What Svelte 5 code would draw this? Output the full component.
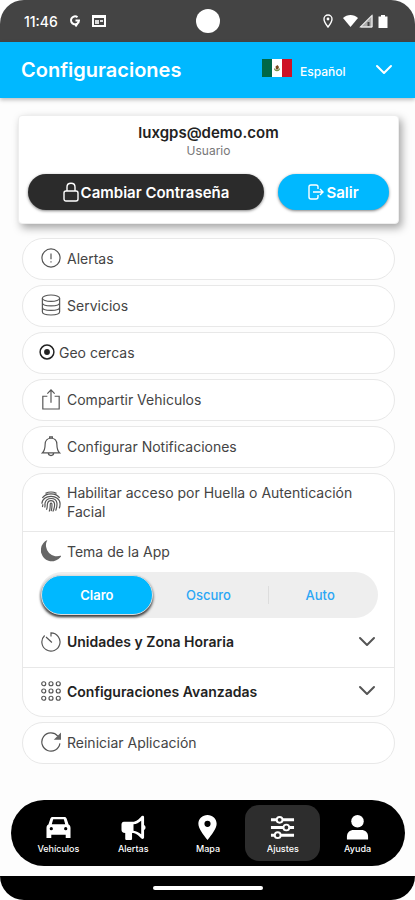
<script lang="ts">
	type Item = { label: string; icon: string };

	const items: Item[] = [
		{ label: 'Alertas', icon: 'alert' },
		{ label: 'Servicios', icon: 'database' },
		{ label: 'Geo cercas', icon: 'target' },
		{ label: 'Compartir Vehiculos', icon: 'share' },
		{ label: 'Configurar Notificaciones', icon: 'bell' }
	];

	const themes: string[] = ['Claro', 'Oscuro', 'Auto'];

	const tabs: Item[] = [
		{ label: 'Vehículos', icon: 'car' },
		{ label: 'Alertas', icon: 'horn' },
		{ label: 'Mapa', icon: 'pin' },
		{ label: 'Ajustes', icon: 'sliders' },
		{ label: 'Ayuda', icon: 'person' }
	];

	let theme = $state('Claro');
	let activeTab = $state('Ajustes');
	let language = $state('Español');
	let unitsOpen = $state(false);
	let advancedOpen = $state(false);
</script>

{#snippet chevron()}
	<svg class="chevron" viewBox="0 0 18 12" aria-hidden="true">
		<path d="M2 2l7 7 7-7" />
	</svg>
{/snippet}

{#snippet lineIcon(name: string)}
	<svg class="line-icon" class:small={name === 'target'} viewBox="0 0 22 24" aria-hidden="true">
		{#if name === 'alert'}
			<circle cx="11" cy="12" r="10" />
			<path d="M11 7v6.5M11 15.5v1.5" />
		{:else if name === 'database'}
			<ellipse cx="11" cy="4.5" rx="9.5" ry="3.5" />
			<path d="M1.500 4.500v15c0 2 4 3.500 9.500 3.500s9.500-1.500 9.500-3.500v-15M1.500 9.500c0 2 4 3.500 9.500 3.500s9.500-1.500 9.500-3.500M1.500 14.500c0 2 4 3.500 9.500 3.500s9.500-1.500 9.500-3.500" />
		{:else if name === 'target'}
			<circle cx="11" cy="12" r="9.500" class="ring" />
			<circle cx="11" cy="12" r="4" class="dot" />
		{:else if name === 'share'}
			<path d="M7 9H2v14h18V9h-5M11 16V2M7 6l4-4 4 4" />
		{:else if name === 'bell'}
			<path d="M1.500 19.500c2-2 3-4 3-9 0-4.500 2.500-7 6.500-7s6.500 2.500 6.500 7c0 5 1 7 3 9zM9.500 3.500V2h3v1.500M8 19.500c0 4 6 4 6 0" />
		{:else if name === 'finger'}
			<path
				d="M5 2.500c4-2 8-2 12 0M1.500 7.500c4-6 15-6 19 0M1 14c0-11 20-11 20 0 0 2-.3 4-1 5M4 18c1-2 0-3 .5-5 1.500-6.500 12-6.500 13 0 .3 3-.2 6-1.500 8.500M6 20.500c1.500-3 .5-4.500 1.200-7 1-4 6.600-4 7.600 0 .5 3-.2 6-1.800 9M9 22.500c1.500-3.500 1-6 1.200-8.500.3-1 1.500-1 1.800 0 .2 3 0 5-.8 8M1.500 17.500c.5-1 .5-2 .5-3"
			/>
		{:else if name === 'moon'}
			<path class="moon" d="M7 0A12 12 0 0 0 23 16.500 12.200 12.200 0 1 1 7 0z" />
		{:else if name === 'timer'}
			<path d="M11 6V2a10 10 0 1 1-7 2.800M5.500 6.500l6.500 6" />
		{:else if name === 'grid'}
			{#each [4, 12, 20] as cy}
				{#each [3, 11, 19] as cx}
					<circle {cx} {cy} r="2.200" />
				{/each}
			{/each}
		{:else if name === 'reload'}
			<path d="M18.500 5.500a10 10 0 1 0 2.300 8" />
			<path class="arrow" d="M22 1.500v8h-8z" />
		{/if}
	</svg>
{/snippet}

{#snippet tabIcon(name: string)}
	<svg class="tab-icon" viewBox="0 0 26 26" aria-hidden="true">
		{#if name === 'car'}
			<path
				fill-rule="evenodd"
				d="M7 2h12c1.500 0 2 .6 2.500 2l2 6c1.300.8 2 1.800 2 3.500V24h-5v-3.500H5.500V24h-5V13.500c0-1.700.7-2.700 2-3.500l2-6C5 2.600 5.500 2 7 2zM7.500 4.500L6 9.500h14l-1.500-5zM5.500 12.500a1.700 1.700 0 1 0 0 3.400 1.700 1.700 0 0 0 0-3.400zM20.500 12.500a1.700 1.700 0 1 0 0 3.400 1.700 1.700 0 0 0 0-3.400z"
			/>
		{:else if name === 'horn'}
			<path
				fill-rule="evenodd"
				d="M3 7h9c4 0 7-3 9-5.500.8-1 3-.8 3 .8v8c2 .8 2 4.400 0 5.200v8c0 1.600-2.200 1.800-3 .8-2-2.500-5-5.300-8-5.700h-1.500v6.200c0 1-.8 1.400-1.500 1.400H6c-1 0-1.600-.6-1.600-1.600v-5.800C1.500 18.800.5 17 .5 15V10c0-1.800 1-3 2.500-3zM13 9.700v6.600c3 .3 5.600 1.700 8 3.700V6c-2.400 2-5 3.400-8 3.700z"
			/>
		{:else if name === 'pin'}
			<path
				fill-rule="evenodd"
				d="M13 0c5.200 0 9.500 4 9.500 9 0 5-5 11-9.500 17C8.500 20 3.500 14 3.500 9c0-5 4.300-9 9.500-9zM13 6a3.200 3.200 0 1 0 0 6.400A3.200 3.200 0 0 0 13 6z"
			/>
		{:else if name === 'sliders'}
			<path class="track" d="M1 5h24M1 13h24M1 21h24" />
			<g class="knob">
				<circle cx="10" cy="5" r="3" />
				<circle cx="17" cy="13" r="3" />
				<circle cx="8" cy="21" r="3" />
			</g>
		{:else}
			<circle cx="13" cy="6.500" r="6.500" />
			<path d="M2 25.500v-3C2 18 5 15.500 9 15.500h8c4 0 7 2.500 7 7v3z" />
		{/if}
	</svg>
{/snippet}

<div class="app">
	<div class="status">
		<div class="status-side">
			<span>11:46</span>
			<svg class="s-icon" viewBox="0 0 14 14" aria-hidden="true">
				<path d="M9.500 3.200A4 4 0 1 0 11 6.500H7.500M10.500 8L7.500 12.500" fill="none" stroke="#fff" stroke-width="2" />
			</svg>
			<svg class="s-icon" viewBox="0 0 14 14" aria-hidden="true">
				<path fill="#fff" fill-rule="evenodd" d="M0 1h14v12H0zM2 4v7h10V4z" />
				<path fill="#ddd" d="M3 6h4v4H3zM8 6h3v2H8z" />
			</svg>
		</div>
		<span class="camera"></span>
		<div class="status-side right">
			<svg class="s-icon" viewBox="0 0 14 14" aria-hidden="true">
				<path d="M7 1a4 4 0 0 1 4 4c0 3-4 8-4 8S3 8 3 5a4 4 0 0 1 4-4z" fill="none" stroke="#fff" stroke-width="1.400" />
				<circle cx="7" cy="5" r="1.400" fill="#fff" />
			</svg>
			<svg class="signals" viewBox="0 0 48 14" aria-hidden="true">
				<path fill="#fff" d="M0 4c4-4 11-4 15 0l-7.500 9z" />
				<path fill="#aaa" d="M16 13.500L29.500 0v13.500z" />
				<path fill="none" stroke="#fff" d="M17.500 13L29 1.500V13z" />
				<path fill="#444" d="M24.500 8h2v4h-2z" />
				<path fill="#fff" d="M38 1h4v1.500h2.500V14h-9V2.500H38z" />
			</svg>
		</div>
	</div>

	<header class="topbar">
		<h1>Configuraciones</h1>
		<label class="language">
			<svg class="flag" viewBox="0 0 30 18" role="img" aria-label="México">
				<path fill="#fff" d="M0 0h30v18H0z" />
				<path fill="#006847" d="M0 0h10v18H0z" />
				<path fill="#ce1126" d="M20 0h10v18H20z" />
				<path fill="none" stroke="#6b8c3c" stroke-width="1.200" d="M12.500 9.500c.5 3 4.500 3 5 0" />
				<path fill="#7a4a1e" d="M13.500 7.500l2-1.500 1.500 2-1 2.500h-2z" />
			</svg>
			<select bind:value={language} aria-label="Idioma">
				<option>Español</option>
				<option>English</option>
			</select>
			{@render chevron()}
		</label>
	</header>

	<main>
		<section class="account">
			<strong class="email">luxgps@demo.com</strong>
			<span class="role">Usuario</span>
			<div class="actions">
				<button class="pill dark">
					<svg class="lock" viewBox="0 0 16 20" aria-hidden="true">
						<rect x="1" y="9" width="14" height="10" rx="2" />
						<path d="M4 9V5c0-5 8-5 8 0v4" />
					</svg>
					Cambiar Contraseña
				</button>
				<button class="pill blue">
					<svg class="exit" viewBox="0 0 16 16" aria-hidden="true">
						<path d="M10 5V3c0-1.500-.5-2-2-2H3C1.500 1 1 1.500 1 3v10c0 1.500.5 2 2 2h5c1.500 0 2-.5 2-2v-2M5 8h10M12 5l3 3-3 3" />
					</svg>
					Salir
				</button>
			</div>
		</section>

		<div class="list">
			{#each items as item (item.label)}
				<button class="row single">
					{@render lineIcon(item.icon)}
					<span>{item.label}</span>
				</button>
			{/each}

			<div class="group">
				<button class="row biometric">
					{@render lineIcon('finger')}
					<span>Habilitar acceso por Huella o Autenticación Facial</span>
				</button>

				<fieldset class="theme">
					<legend class="row">
						{@render lineIcon('moon')}
						<span>Tema de la App</span>
					</legend>
					<div class="segment">
						{#each themes as name (name)}
							<label class:selected={theme === name}>
								<input type="radio" name="theme" value={name} bind:group={theme} />
								{name}
							</label>
						{/each}
					</div>
				</fieldset>

				<button class="row expand" aria-expanded={unitsOpen} onclick={() => (unitsOpen = !unitsOpen)}>
					{@render lineIcon('timer')}
					<span>Unidades y Zona Horaria</span>
					{@render chevron()}
				</button>
				<button
					class="row expand advanced"
					aria-expanded={advancedOpen}
					onclick={() => (advancedOpen = !advancedOpen)}
				>
					{@render lineIcon('grid')}
					<span>Configuraciones Avanzadas</span>
					{@render chevron()}
				</button>
			</div>

			<button class="row single">
				{@render lineIcon('reload')}
				<span>Reiniciar Aplicación</span>
			</button>
		</div>
	</main>

	<nav class="tabs">
		{#each tabs as tab (tab.label)}
			<button class:active={activeTab === tab.label} onclick={() => (activeTab = tab.label)}>
				{@render tabIcon(tab.icon)}
				<span>{tab.label}</span>
			</button>
		{/each}
	</nav>

	<div class="gesture"><span></span></div>
</div>

<style>
	:global(body) {
		background: #fff;
	}

	.app {
		display: flex;
		flex-direction: column;
		min-height: 100vh;
		box-sizing: border-box;
		background: #fdfdfd;
		color: #444;
		font-family: Inter, 'Liberation Sans', sans-serif;
		border-radius: 24px;
		overflow: hidden;
	}

	.app * {
		box-sizing: border-box;
	}

	button,
	select {
		font: inherit;
		color: inherit;
		background: none;
		border: none;
		margin: 0;
		padding: 0;
		cursor: pointer;
	}

	svg {
		flex: none;
		display: block;
	}

	/* Status bar */
	.status {
		display: grid;
		grid-template-columns: 1fr auto 1fr;
		align-items: center;
		height: 42px;
		padding: 0 24px;
		background: #444;
		color: #fff;
		font-size: 14px;
		font-weight: 500;
	}

	.status-side {
		display: flex;
		align-items: center;
		gap: 10px;
	}

	.right {
		justify-content: flex-end;
		gap: 8px;
	}

	.s-icon {
		width: 14px;
		height: 14px;
	}

	.signals {
		width: 48px;
		height: 14px;
	}

	.camera {
		width: 24px;
		height: 24px;
		border-radius: 50%;
		background: #fff;
	}

	/* Header */
	.topbar {
		display: flex;
		align-items: center;
		justify-content: space-between;
		height: 56px;
		padding: 0 22px 0 21px;
		background: #00b8ff;
		color: #fff;
		box-shadow: 0 2px 4px rgba(0, 0, 0, 0.25);
	}

	h1 {
		margin: 0;
		font-size: 20px;
		font-weight: 600;
	}

	.language {
		display: flex;
		align-items: center;
		gap: 8px;
	}

	.flag {
		width: 30px;
		height: 18px;
		margin-bottom: 4px;
	}

	select {
		appearance: none;
		width: 67px;
		padding-top: 2px;
		font-size: 12px;
		font-weight: 500;
	}

	option {
		color: #222;
	}

	.chevron {
		width: 18px;
		height: 12px;
		fill: none;
		stroke: currentColor;
		stroke-width: 2;
		stroke-linecap: round;
		stroke-linejoin: round;
	}

	/* Account card */
	.account {
		display: flex;
		flex-direction: column;
		align-items: center;
		margin: 17px 16px 0 18px;
		padding: 8px 9px 13px;
		background: #fff;
		border: 1px solid #eee;
		border-radius: 4px;
		box-shadow: 3px 4px 8px rgba(0, 0, 0, 0.35);
	}

	.email {
		font-size: 15px;
		font-weight: 600;
		line-height: 18px;
		color: #222;
	}

	.role {
		font-size: 12px;
		line-height: 18px;
		color: #777;
	}

	.actions {
		display: grid;
		grid-template-columns: 236fr 111fr;
		gap: 14px;
		width: 100%;
		margin-top: 14px;
	}

	.pill {
		display: flex;
		align-items: center;
		justify-content: center;
		gap: 2px;
		height: 36px;
		border-radius: 18px;
		color: #fff;
		font-size: 15px;
		font-weight: 600;
		box-shadow: 0 1px 3px rgba(0, 0, 0, 0.5);
	}

	.pill svg {
		width: 16px;
		fill: none;
		stroke: #fff;
		stroke-width: 1.4;
	}

	.dark {
		background: #2b2b2b;
	}

	.blue {
		background: #00b8ff;
	}

	.lock {
		height: 20px;
	}

	.exit {
		height: 16px;
	}

	/* Settings list */
	.list {
		display: flex;
		flex-direction: column;
		gap: 5px;
		padding: 14px 20px 24px 22px;
	}

	.row {
		display: flex;
		align-items: center;
		gap: 6px;
		width: 100%;
		padding: 0 18px 2px;
		font-size: 14px;
		line-height: 19px;
		text-align: left;
	}

	.single {
		height: 42px;
		background: #fff;
		border: 1px solid #e8e8e8;
		border-radius: 21px;
	}

	.line-icon {
		width: 20px;
		height: 22px;
		fill: none;
		stroke: #555;
		stroke-width: 1.3;
	}

	.line-icon.small {
		width: 16px;
		height: 18px;
		margin: 0 -2px;
	}

	.ring {
		stroke: #222;
		stroke-width: 2;
	}

	.dot {
		fill: #222;
		stroke: none;
	}

	.moon,
	.arrow {
		fill: #666;
		stroke: none;
	}

	.group {
		background: #fff;
		border: 1px solid #e8e8e8;
		border-radius: 21px;
	}

	.biometric {
		height: 58px;
		border-bottom: 1px solid #e8e8e8;
	}

	.theme {
		border: none;
		margin: 0;
		padding: 0;
	}

	legend {
		height: 40px;
	}

	.segment {
		display: grid;
		grid-template-columns: repeat(3, 1fr);
		height: 46px;
		margin: 0 16px;
		padding: 3px 2px;
		background: #eee;
		border-radius: 23px;
	}

	.segment label {
		display: flex;
		align-items: center;
		justify-content: center;
		position: relative;
		border-radius: 20px;
		font-size: 13px;
		font-weight: 500;
		color: #2ba6f5;
		cursor: pointer;
	}

	.segment input {
		position: absolute;
		opacity: 0;
	}

	.segment .selected {
		background: #00b8ff;
		border: 1px solid #ddd;
		color: #fff;
		font-weight: 600;
		box-shadow: 0 2px 3px rgba(0, 0, 0, 0.8);
	}

	.segment label:last-child::before {
		content: '';
		position: absolute;
		left: 4px;
		height: 18px;
		border-left: 1px solid #ddd;
	}

	.expand {
		height: 49px;
		font-weight: 600;
		color: #222;
	}

	.expand span {
		flex: 1;
	}

	.expand .chevron {
		color: #555;
	}

	.advanced {
		border-top: 1px solid #e8e8e8;
	}

	/* Bottom navigation */
	.tabs {
		display: grid;
		grid-template-columns: repeat(5, 1fr);
		margin: auto 10px 10px 11px;
		padding: 5px 10px;
		background: #000;
		border-radius: 33px;
	}

	.tabs button {
		display: flex;
		flex-direction: column;
		align-items: center;
		gap: 3px;
		height: 56px;
		padding-top: 10px;
		border-radius: 14px;
		color: #fff;
		font-size: 9px;
		line-height: 12px;
		font-weight: 500;
	}

	.tabs .active {
		background: #2d2d2d;
	}

	.tab-icon {
		width: 25px;
		height: 25px;
		fill: #fff;
	}

	.track {
		stroke: #fff;
		stroke-width: 3;
	}

	.knob {
		fill: #2d2d2d;
		stroke: #fff;
		stroke-width: 2;
	}

	.gesture {
		display: flex;
		justify-content: center;
		height: 24px;
		padding-top: 10px;
		background: #000;
	}

	.gesture span {
		width: 110px;
		height: 4px;
		border-radius: 2px;
		background: #fff;
	}
</style>
